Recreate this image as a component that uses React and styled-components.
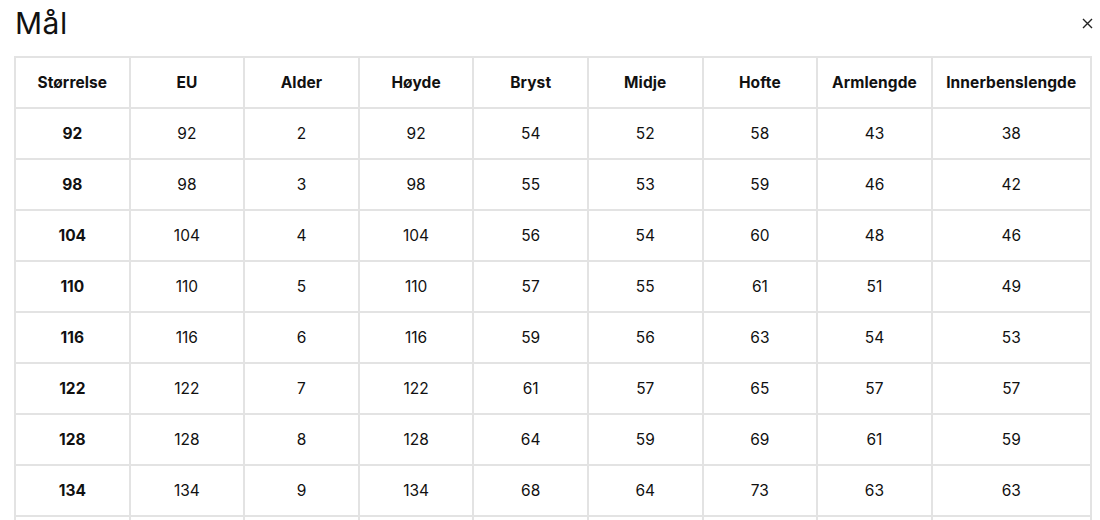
import React from "react";
import styled, { createGlobalStyle } from "styled-components";

const sizes = [
  [92, 92, 2, 92, 54, 52, 58, 43, 38],
  [98, 98, 3, 98, 55, 53, 59, 46, 42],
  [104, 104, 4, 104, 56, 54, 60, 48, 46],
  [110, 110, 5, 110, 57, 55, 61, 51, 49],
  [116, 116, 6, 116, 59, 56, 63, 54, 53],
  [122, 122, 7, 122, 61, 57, 65, 57, 57],
  [128, 128, 8, 128, 64, 59, 69, 61, 59],
  [134, 134, 9, 134, 68, 64, 73, 63, 63],
  [140, 140, 10, 140, 72, 66, 76, 66, 67],
];

const headers = [
  "Størrelse",
  "EU",
  "Alder",
  "Høyde",
  "Bryst",
  "Midje",
  "Hofte",
  "Armlengde",
  "Innerbenslengde",
];

const GlobalStyle = createGlobalStyle`
  body {
    margin: 0;
    background: #fff;
    color: #111;
    font-family: Inter, "Noto Sans", sans-serif;
  }
`;

const Modal = styled.div`
  padding: 0 6px 0 14px;
  height: 520px;
  overflow: hidden;
`;

const Header = styled.div`
  display: flex;
  justify-content: space-between;
  align-items: center;
  height: 46px;
  margin-bottom: 10px;
`;

const Title = styled.h2`
  margin: 0;
  font-size: 30px;
  font-weight: 400;
  letter-spacing: 0.5px;
  padding-left: 1px;
`;

const Close = styled.button`
  border: none;
  background: none;
  padding: 0;
  width: 14px;
  height: 14px;
  display: flex;
  align-items: center;
  justify-content: center;
  color: #222;
  cursor: pointer;
`;

const Table = styled.table`
  border-collapse: collapse;
  table-layout: fixed;
  width: 1076px;
  text-align: center;
`;

const Col = styled.col`
  width: ${(p) => (p.wide ? "159px" : "114.6px")};
`;

const Th = styled.th`
  border: 2px solid #e3e3e3;
  height: 49px;
  padding: 0;
  font-size: 15.5px;
  font-weight: 700;
  letter-spacing: 0.1px;
`;

const Td = styled.td`
  border: 2px solid #e3e3e3;
  height: 49px;
  padding: 0;
  font-size: 15.5px;
  font-weight: ${(p) => (p.strong ? 700 : 400)};
`;

export default function App() {
  return (
    <Modal>
      <GlobalStyle />
      <Header>
        <Title>Mål</Title>
        <Close aria-label="Lukk">
          <svg width="11" height="11" viewBox="0 0 11 11">
            <path d="M1 1L10 10M10 1L1 10" stroke="currentColor" strokeWidth="1.4" />
          </svg>
        </Close>
      </Header>
      <Table>
        <colgroup>
          {headers.map((h, i) => (
            <Col key={h} wide={i === headers.length - 1} />
          ))}
        </colgroup>
        <thead>
          <tr>
            {headers.map((h) => (
              <Th key={h}>{h}</Th>
            ))}
          </tr>
        </thead>
        <tbody>
          {sizes.map((row) => (
            <tr key={row[0]}>
              {row.map((v, i) => (
                <Td key={i} strong={i === 0}>
                  {v}
                </Td>
              ))}
            </tr>
          ))}
        </tbody>
      </Table>
    </Modal>
  );
}
